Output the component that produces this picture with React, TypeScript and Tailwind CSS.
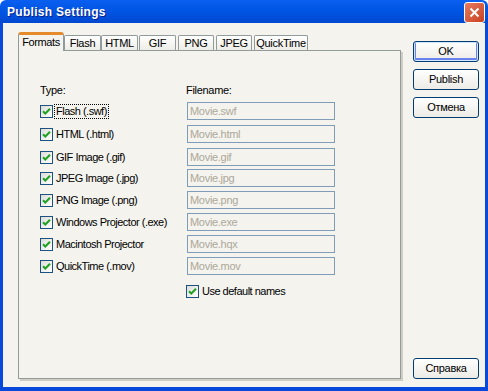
import React from "react";

const font = { fontFamily: '"Liberation Sans", Tahoma, Arial, sans-serif' };

function Check({ focus, label }: { focus?: boolean; label: string }) {
  return (
    <div className="flex items-center h-[18px]">
      <div className="w-[13px] h-[13px] border border-[#1C5180] bg-gradient-to-br from-[#DCDCD7] to-[#FFFFFF] flex items-center justify-center shrink-0">
        <svg width="9" height="9" viewBox="0 0 9 9">
          <path d="M1 4.2 L3.3 6.5 L8 1.8" stroke="#21A121" strokeWidth="2" fill="none" />
        </svg>
      </div>
      <span
        className={`ml-[2px] text-[11px] leading-[13px] tracking-[-0.5px] text-black px-[1px] ${
          focus ? "outline outline-1 outline-dotted outline-black" : ""
        }`}
      >
        {label}
      </span>
    </div>
  );
}

function Input({ value }: { value: string }) {
  return (
    <div className="w-[148px] h-[18px] border border-[#7F9DB9] bg-[#F4F3EE] flex items-center pl-[2px] text-[11px] tracking-[-0.3px] text-[#ACA899]">
      {value}
    </div>
  );
}

function Btn({ label, def }: { label: string; def?: boolean }) {
  return (
    <div
      className={`w-[66px] h-[21px] rounded-[3px] border border-[#003C74] bg-gradient-to-b from-[#FFFFFF] to-[#ECEBE6] flex items-center justify-center text-[11px] tracking-[-0.3px] text-black ${
        def ? "shadow-[inset_0_0_0_1px_#CEE7FF,inset_0_-1px_0_2px_#6982EE]" : ""
      }`}
    >
      {label}
    </div>
  );
}

function Tab({ label, active, w }: { label: string; active?: boolean; w: string }) {
  if (active) {
    return (
      <div
        className={`${w} h-[19px] relative z-10 bg-[#F4F3EE] border-x border-[#919B9C] border-t-[3px] border-t-[#E68B2C] rounded-t-[3px] flex items-center justify-center text-[11px] tracking-[-0.4px] text-black pb-[2px]`}
      >
        {label}
      </div>
    );
  }
  return (
    <div
      className={`${w} h-[16px] mt-[2px] bg-gradient-to-b from-[#FFFFFF] to-[#ECEBE5] border border-b-0 border-[#919B9C] rounded-t-[2px] flex items-center justify-center text-[11px] tracking-[-0.3px] text-black`}
    >
      {label}
    </div>
  );
}

const rows: { label: string; file: string; mt: string }[] = [
  { label: "Flash (.swf)", file: "Movie.swf", mt: "mt-0" },
  { label: "HTML (.html)", file: "Movie.html", mt: "mt-[5px]" },
  { label: "GIF Image (.gif)", file: "Movie.gif", mt: "mt-[5px]" },
  { label: "JPEG Image (.jpg)", file: "Movie.jpg", mt: "mt-[3px]" },
  { label: "PNG Image (.png)", file: "Movie.png", mt: "mt-[4px]" },
  { label: "Windows Projector (.exe)", file: "Movie.exe", mt: "mt-[4px]" },
  { label: "Macintosh Projector", file: "Movie.hqx", mt: "mt-[4px]" },
  { label: "QuickTime (.mov)", file: "Movie.mov", mt: "mt-[4px]" },
];

export default function App() {
  return (
    <div className="w-[488px] h-[391px] flex flex-col overflow-hidden" style={font}>
      {/* Title bar */}
      <div className="h-[23px] shrink-0 bg-gradient-to-b from-[#0A5FF0] via-[#0054E3] to-[#0048D0] rounded-t-[6px] flex items-center pl-[7px] pr-[3px] relative">
        <span className="text-white font-bold text-[12px] tracking-[0.3px] [text-shadow:1px_1px_0_#0A1E8C]">
          Publish Settings
        </span>
        <div className="ml-auto w-[21px] h-[21px] mt-[1px] rounded-[3px] border border-white bg-gradient-to-br from-[#E87A5E] to-[#C8401F] flex items-center justify-center">
          <svg width="11" height="11" viewBox="0 0 11 11">
            <path d="M1.5 1.5 L9.5 9.5 M9.5 1.5 L1.5 9.5" stroke="white" strokeWidth="2" />
          </svg>
        </div>
      </div>
      {/* Body */}
      <div className="flex-1 border-x-[3px] border-b-[4px] border-[#0848DA] bg-[#F4F3EE] flex pl-[15px] pt-[9px]">
        {/* left: tabs and panel */}
        <div className="flex flex-col w-[385px]">
          <div className="flex items-end h-[19px] -mb-[1px]">
            <Tab label="Formats" active w="w-[46px]" />
            <Tab label="Flash" w="w-[37px]" />
            <Tab label="HTML" w="w-[37px]" />
            <div className="w-[1px]" />
            <Tab label="GIF" w="w-[37px]" />
            <div className="w-[2px]" />
            <Tab label="PNG" w="w-[36px]" />
            <div className="w-[2px]" />
            <Tab label="JPEG" w="w-[36px]" />
            <div className="w-[2px]" />
            <Tab label="QuickTime" w="w-[54px]" />
          </div>
          <div className="h-[329px] border border-[#919B9C] shadow-[2px_2px_0_#D0CEC4] w-[383px] bg-[#F4F3EE] pl-[21px] pt-[33px]">
            <div className="flex">
              <div className="w-[146px] text-[11px] leading-[13px] tracking-[-0.3px] text-black">Type:</div>
              <div className="text-[11px] leading-[13px] tracking-[-0.3px] text-black">Filename:</div>
            </div>
            <div className="flex flex-col mt-[5px]">
              {rows.map((r, i) => (
                <div key={i} className={`flex ${r.mt}`}>
                  <div className="w-[147px]">
                    <Check label={r.label} focus={i === 0} />
                  </div>
                  <Input value={r.file} />
                </div>
              ))}
            </div>
            <div className="ml-[146px] mt-[7px]">
              <Check label="Use default names" />
            </div>
          </div>
        </div>
        {/* right: buttons */}
        <div className="ml-[10px] flex flex-col pt-[9px] pb-[8px]">
          <Btn label="OK" def />
          <div className="mt-[7px]">
            <Btn label="Publish" />
          </div>
          <div className="mt-[7px]">
            <Btn label="Отмена" />
          </div>
          <div className="mt-auto">
            <Btn label="Справка" />
          </div>
        </div>
      </div>
    </div>
  );
}
